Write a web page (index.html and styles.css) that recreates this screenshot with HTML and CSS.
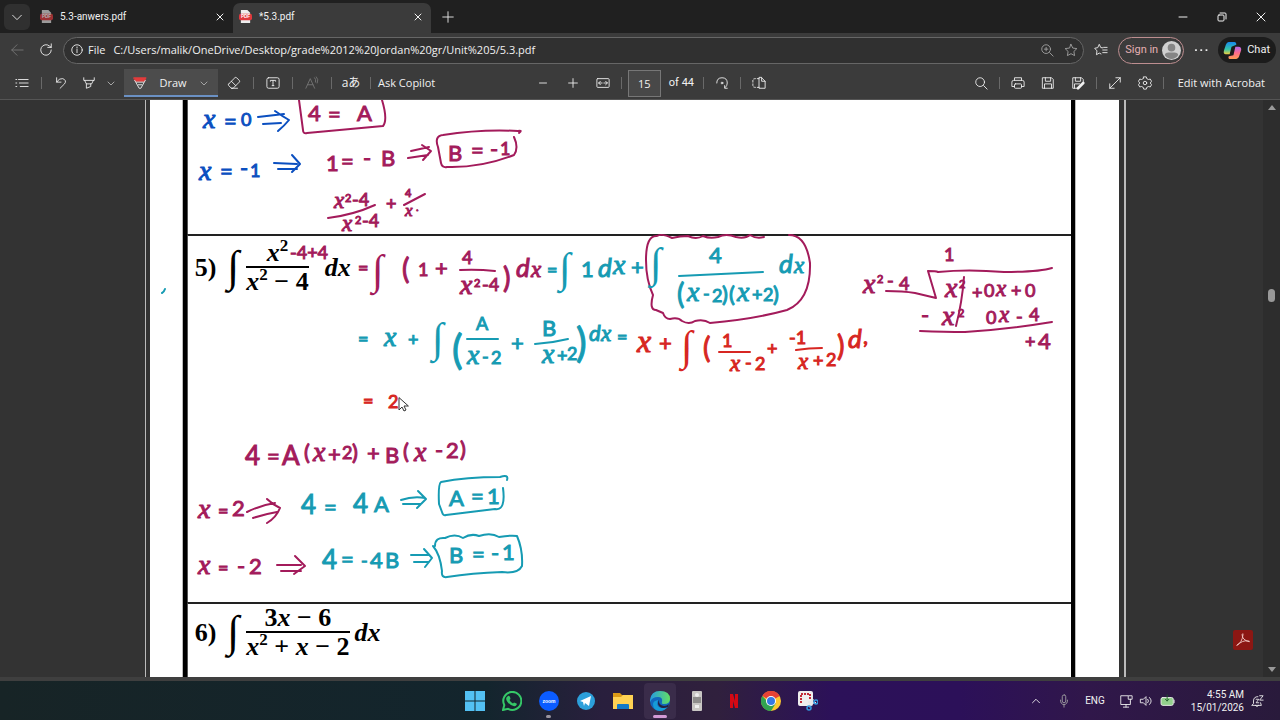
FILE: index.html
```html
<!DOCTYPE html>
<html lang="en">
<head>
<meta charset="utf-8">
<title>5.3.pdf</title>
<link rel="stylesheet" href="styles.css">
</head>
<body>
<header class="tabs">
  <button class="tab-menu" aria-label="Tab actions"><svg class="i" viewBox="0 0 16 16"><path d="M3 6l5 5 5-5"/></svg></button>
  <div class="tab">
    <svg class="pdf dim" viewBox="0 0 14 14"><path d="M2 0h7l3 3v11H2z" fill="#ddd"/><rect y="4" width="14" height="7" rx="2" fill="#e0393e"/><text x="7" y="9">PDF</text></svg>
    <span class="tab-name">5.3-anwers.pdf</span>
    <button class="plain" aria-label="Close tab"><svg class="x" viewBox="0 0 10 10"><path d="M2 2l6 6M8 2l-6 6"/></svg></button>
  </div>
  <div class="tab active">
    <svg class="pdf" viewBox="0 0 14 14"><path d="M2 0h7l3 3v11H2z" fill="#eee"/><rect y="4" width="14" height="7" rx="2" fill="#e0393e"/><text x="7" y="9">PDF</text></svg>
    <span class="tab-name">*5.3.pdf</span>
    <button class="plain" aria-label="Close tab"><svg class="x" viewBox="0 0 10 10"><path d="M2 2l6 6M8 2l-6 6"/></svg></button>
  </div>
  <button class="plain new" aria-label="New tab"><svg class="i" viewBox="0 0 16 16"><path d="M8 2v12M2 8h12"/></svg></button>
  <div class="win">
    <button class="plain" aria-label="Minimize"><svg class="x" viewBox="0 0 10 10"><path d="M1 5h8"/></svg></button>
    <button class="plain" aria-label="Restore"><svg class="x" viewBox="0 0 10 10"><rect x="1" y="3" width="6" height="6" rx="1"/><path d="M3 1h5q1 0 1 1v5"/></svg></button>
    <button class="plain" aria-label="Close"><svg class="x" viewBox="0 0 10 10"><path d="M1 1l8 8M9 1l-8 8"/></svg></button>
  </div>
</header>

<nav class="address-row">
  <button class="plain faint" aria-label="Back"><svg class="i" viewBox="0 0 16 16"><path d="M15 8H2M8 2L2 8l6 6"/></svg></button>
  <button class="plain" aria-label="Refresh"><svg class="i" viewBox="0 0 16 16"><path d="M14 8a6 6 0 1 1-2-4.500L14 5M14 1v4h-4"/></svg></button>
  <div class="address">
    <svg class="i" viewBox="0 0 16 16"><circle cx="8" cy="8" r="6"/><path d="M8 7v4M8 4.500v1"/></svg>
    <label class="file" for="url">File</label>
    <input id="url" class="url" value="C:/Users/malik/OneDrive/Desktop/grade%2012%20Jordan%20gr/Unit%205/5.3.pdf">
    <button class="plain soft" aria-label="Zoom"><svg class="i" viewBox="0 0 16 16"><circle cx="7" cy="7" r="5"/><path d="M11 11l4 4M7 5v4M5 7h4"/></svg></button>
    <button class="plain soft" aria-label="Favourite"><svg class="i" viewBox="0 0 16 16"><path d="M8 1.500l2 4.300 4.700.6-3.400 3.300.8 4.700L8 12.200l-4.100 2.200.8-4.700L1.300 6.400 6 5.800z"/></svg></button>
  </div>
  <button class="plain fav" aria-label="Favourites"><svg class="i" viewBox="0 0 16 16"><path d="M10 5.500L7.800 5.300 6 1.500 4.300 5.300.8 6l2.600 3-.6 4.400L6 11.500l2 1M11 5h4M10 8h5M10 11h5"/></svg></button>
  <button class="signin">Sign in <svg viewBox="0 0 20 20"><circle cx="10" cy="10" r="10" fill="#cfcfcf"/><circle cx="10" cy="7" r="4" fill="#858585"/><path d="M3 15q0-3 4-3h6q4 0 4 3-3 4-7 4t-7-4z" fill="#858585"/></svg></button>
  <button class="plain" aria-label="More"><svg class="i" viewBox="0 0 16 16"><path stroke-width="2" d="M2 8h.5M8 8h.5M14 8h.5"/></svg></button>
  <button class="chat"><svg viewBox="0 0 20 20"><defs><linearGradient id="ca" x2="0" y2="1"><stop stop-color="#1688ef"/><stop offset=".6" stop-color="#36c5a7"/><stop offset="1" stop-color="#f4d03c"/></linearGradient><linearGradient id="cb" x2="0" y2="1"><stop stop-color="#b267ec"/><stop offset=".5" stop-color="#ff6b8b"/><stop offset="1" stop-color="#ff9d52"/></linearGradient></defs><path d="M6 1h6q2 0 2 3L9 6 7 14H3q-3 0-2-4l2-6q1-3 3-3z" fill="url(#ca)"/><path d="M14 19H8q-3 0-2-3l5-1 2-9h3q4 0 3 4l-2 6q-1 3-3 3z" fill="url(#cb)"/></svg>Chat</button>
</nav>

<div class="tools">
  <button class="plain" aria-label="Contents"><svg class="i" viewBox="0 0 16 16"><path d="M1 4h1M4 4h11M1 8h1M5 8h10M1 12h1M6 12h9"/></svg></button>
  <i class="sep"></i>
  <button class="plain" aria-label="Undo"><svg class="i" viewBox="0 0 16 16"><path d="M3 2v5h5M3 7q3-5 7-4 5 2 2 6l-5 5"/></svg></button>
  <button class="plain" aria-label="Highlight"><svg class="i" viewBox="0 0 16 16"><path d="M2 2v3h12V2M3 5l2 4h6l2-4M5 9v5l5-2V9"/></svg></button>
  <button class="plain soft narrow" aria-label="Highlight colours"><svg class="x" viewBox="0 0 10 10"><path d="M2 4l3 3 3-3"/></svg></button>
  <button class="draw"><svg class="i" viewBox="0 0 16 16"><path d="M1 2h14l-2 4H3z" fill="#e33b3b" stroke="#e33b3b"/><path d="M2 5l5 9h2l5-9M4 7h8M6 10h4"/></svg>Draw<svg class="x soft" viewBox="0 0 10 10"><path d="M2 4l3 3 3-3"/></svg></button>
  <button class="plain" aria-label="Erase"><svg class="i" viewBox="0 0 16 16"><path d="M2 9l7-7q1-1 2 0l3 3q1 1 0 2l-7 7H5L2 11q-1-1 0-2zM5 6l5 5M5 14h7"/></svg></button>
  <i class="sep"></i>
  <button class="plain" aria-label="Add text"><svg class="i" viewBox="0 0 16 16"><rect x="1" y="2" width="14" height="12" rx="2"/><path d="M5 6V5h6v1M8 5v6M7 11h2"/></svg></button>
  <i class="sep"></i>
  <button class="plain faint" aria-label="Read aloud"><svg class="i" viewBox="0 0 16 16"><path d="M1 14L6 3l5 11M3 10h6M11 2q2 2 1 5M13 1q3 3 1 7"/></svg></button>
  <i class="sep"></i>
  <button class="plain translate">aあ</button>
  <i class="sep"></i>
  <button class="plain word">Ask Copilot</button>
  <div class="pager">
    <button class="plain" aria-label="Zoom out"><svg class="i" viewBox="0 0 16 16"><path d="M4 8h8"/></svg></button>
    <button class="plain" aria-label="Zoom in"><svg class="i" viewBox="0 0 16 16"><path d="M3 8h10M8 3v10"/></svg></button>
    <button class="plain" aria-label="Fit width"><svg class="i" viewBox="0 0 16 16"><rect x="1" y="3" width="14" height="10" rx="1"/><path d="M3 8h4M9 8h4M5 6L3 8l2 2M11 6l2 2-2 2"/></svg></button>
    <i class="sep"></i>
    <input id="page" class="page-no" value="15"><label for="page">of 44</label>
    <i class="sep"></i>
    <button class="plain" aria-label="Rotate"><svg class="i" viewBox="0 0 16 16"><path d="M2 8q0-6 6-6 6 0 6 6 0 3-2 5M14 14h-3v-3"/><circle cx="8" cy="8" r="1"/></svg></button>
    <i class="sep"></i>
    <button class="plain" aria-label="Page view"><svg class="i" viewBox="0 0 16 16"><path d="M8 3H4Q1 3 1 5v6q0 2 3 2h4" stroke-dasharray="2 2"/><path d="M8 2v12h7V6h-4V2zM11 2l4 4"/></svg></button>
  </div>
  <div class="right-tools">
    <button class="plain" aria-label="Find"><svg class="i" viewBox="0 0 16 16"><circle cx="7" cy="7" r="5"/><path d="M11 11l4 4"/></svg></button>
    <i class="sep"></i>
    <button class="plain" aria-label="Print"><svg class="i" viewBox="0 0 16 16"><path d="M4 5V2h8v3M4 12H1V7q0-2 2-2h10q2 0 2 2v5h-3"/><rect x="4" y="9" width="8" height="5" rx="1"/></svg></button>
    <button class="plain" aria-label="Save"><svg class="i" viewBox="0 0 16 16"><path d="M2 2h10l2 2v10H2zM5 2v4h6V2M4 14V9h8v5"/></svg></button>
    <button class="plain" aria-label="Save as"><svg class="i" viewBox="0 0 16 16"><path d="M7 14H2V2h10l2 2v3M5 2v4h6V2M4 14V9h6"/><path d="M14 8l-6 6" stroke-width="3"/></svg></button>
    <i class="sep"></i>
    <button class="plain" aria-label="Full screen"><svg class="i" viewBox="0 0 16 16"><path d="M2 14L14 2M9 2h5v5M2 9v5h5"/></svg></button>
    <button class="plain" aria-label="Settings"><svg class="i" viewBox="0 0 16 16"><circle cx="8" cy="8" r="2"/><path d="M6.500 1h3l.5 2 2 1 2-.5L15.500 6 14 8l1.500 2-1.500 2.500-2-.5-2 1-.5 2h-3L6 13l-2-1-2 .5L.5 10 2 8 .5 6 2 3.500l2 .5 2-1z"/></svg></button>
    <i class="sep"></i>
    <button class="plain word">Edit with Acrobat</button>
  </div>
</div>

<main class="viewer">
  <div class="sheet-edge">
    <article class="sheet">
      <div class="frame">
        <section class="row top"></section>
        <section class="row mid">
          <div class="formula"><span>5)</span><span class="int">∫</span><span class="frac"><span class="num"><i>x</i><sup>2</sup></span><span><i>x</i><sup>2</sup> − 4</span></span><i class="dx wide">dx</i></div>
        </section>
        <section class="row end">
          <div class="formula"><span>6)</span><span class="int">∫</span><span class="frac"><span class="num">3<i>x</i> − 6</span><span><i>x</i><sup>2</sup> + <i>x</i> − 2</span></span><i class="dx">dx</i></div>
        </section>
      </div>
      <svg class="ink" viewBox="149 100 969 577">
        <g class="blue">
          <text class="v" x="202" y="128">x</text><text x="223" y="129">=</text><text class="s" x="240" y="126">0</text>
          <path d="M257 117l26-3M262 124l18-1M274 111q7 5 14 9-4 5-11 11"/>
          <text class="v" x="198" y="180">x</text><text x="219" y="179">=</text><text x="239" y="176">-</text><text class="s" x="249" y="177">1</text>
          <path d="M273 163l23 1M277 169h19M291 155l8 9-8 8"/>
        </g>
        <g class="plum">
          <text x="307" y="121">4</text><text x="327" y="122">=</text><text x="356" y="121">A</text>
          <path d="M298 100l4 30q0 4 4 3l76-7q5-6-1-26"/>
          <text x="325" y="171">1</text><text x="340" y="169">=</text><text x="362" y="166">-</text><text x="380" y="166">B</text>
          <path d="M410 151l18-4M407 158l20-3M421 145l9 6-8 9"/>
          <text x="447" y="161">B</text><text x="470" y="158">=</text><text x="489" y="157">-</text><text class="s" x="499" y="155">1</text>
          <path d="M518 133q4-3-1-2-37-2-75 4-9 1-5 12l3 16q1 5 6 4 34 1 67-12 5-7 0-18"/>
          <text class="vs" x="333" y="208">x</text><text class="p" x="344" y="202">2</text><text class="s" x="351" y="206">-4</text>
          <path d="M327 218q25-3 47-13"/>
          <text class="vs" x="341" y="231">x</text><text class="p" x="354" y="224">2</text><text class="s" x="361" y="227">-4</text>
          <text class="s" x="385" y="210">+</text><text class="p" x="404" y="197">4</text><path d="M403 205l21-11"/><text class="vt" x="404" y="216">x</text><text class="p" x="415" y="211">.</text>

          <text class="s" x="289" y="259">-4+4</text><text class="s" x="357" y="274">=</text>
          <text class="int" x="371" y="284">∫</text><text class="b" x="401" y="279">(</text>
          <text class="s" x="417" y="276">1</text><text x="434" y="276">+</text><text class="s" x="461" y="264">4</text><path d="M459 270q17-1 35 1"/>
          <text class="v" x="459" y="294">x</text><text class="p" x="473" y="287">2</text><text class="s" x="481" y="291">-4</text>
          <text class="b" x="502" y="288">)</text><text class="d" x="515" y="277">d</text><text class="vs" x="530" y="277">x</text>
          <path d="M763 237q-8 2-14-2-5 4-14 2-10-4-18 0-8 2-15-1-7 4-15 0-8 0-16 2-10-5-15-2-11-1-11 24 0 20 7 35-4 15 3 15l7 3q2 6 7 6 8-2 12 2 7 4 13 0 9-2 15 2 45-4 77-13 24-10 23-47-4-28-21-28"/>
          <text class="s" x="943" y="261">1</text>
          <text class="v" x="862" y="293">x</text><text class="p" x="876" y="283">2</text><text class="s" x="886" y="287">-</text><text class="s" x="898" y="290">4</text>
          <path d="M885 291q17 0 29 2l21 5-8-27q8 0 10 1 30-3 66 0 35 0 48-4M963 277q-2 26-8 49"/>
          <text class="v" x="944" y="297">x</text><text class="p" x="958" y="288">2</text><text class="s" x="971" y="299">+</text><text class="s" x="983" y="297">0</text><text class="vs" x="995" y="296">x</text><text class="s" x="1010" y="297">+</text><text class="s" x="1024" y="297">0</text>
          <text x="920" y="323">-</text><text class="v" x="941" y="325">x</text><text class="p" x="957" y="317">2</text><text class="s" x="985" y="324">0</text><text class="vs" x="998" y="322">x</text><text class="s" x="1015" y="323">-</text><text class="s" x="1028" y="321">4</text>
          <path d="M919 331q25 1 45 1 45-3 87-10"/><text class="s" x="1024" y="348">+</text><text x="1037" y="349">4</text>

          <text class="m" x="244" y="465">4</text><text x="266" y="464">=</text><text class="m" x="281" y="465">A</text><text x="303" y="460">(</text><text class="v" x="312" y="461">x</text><text x="327" y="462">+</text><text class="s" x="341" y="459">2</text><text x="351" y="460">)</text>
          <text x="366" y="461">+</text><text x="384" y="463">B</text><text x="402" y="459">(</text><text class="v" x="413" y="461">x</text><text x="434" y="458">-</text><text x="445" y="458">2</text><text x="459" y="457">)</text>
          <text class="v" x="197" y="518">x</text><text class="s" x="217" y="517">=</text><text x="231" y="516">2</text><path d="M246 512q14-7 28-9M252 518q12-4 24-6M266 499q5 5 13 9-4 10-13 15"/>
          <text class="v" x="197" y="574">x</text><text class="s" x="217" y="574">=</text><text x="236" y="574">-</text><text x="248" y="574">2</text><path d="M276 565h24M280 571h20M294 556l10 10-11 8"/>
        </g>
        <g class="teal">
          <path d="M161 293q2-1 3-4"/>
          <text class="s" x="546" y="276">=</text><text class="int" x="558" y="282">∫</text><text x="580" y="277">1</text><text class="d" x="597" y="277">d</text><text class="v" x="612" y="274">x</text><text x="630" y="275">+</text>
          <text class="int" x="649" y="277">∫</text><text x="708" y="263">4</text><path d="M678 276q40-2 84-4"/><text class="d" x="778" y="273">d</text><text class="vs" x="793" y="273">x</text>
          <text class="b" x="676" y="304">(</text><text class="v" x="686" y="301">x</text><text class="s" x="702" y="300">-</text><text class="s" x="711" y="302">2</text><text x="721" y="302">)</text><text x="728" y="302">(</text><text class="v" x="736" y="301">x</text><text class="s" x="751" y="301">+</text><text class="s" x="762" y="301">2</text><text x="772" y="302">)</text>
          <text class="s" x="357" y="345">=</text><text class="v" x="383" y="346">x</text><text class="s" x="407" y="346">+</text><text class="int" x="431" y="352">∫</text><text class="h" x="451" y="364">(</text>
          <text class="s" x="475" y="330">A</text><path d="M466 339h31"/><text class="v" x="466" y="364">x</text><text class="s" x="481" y="363">-</text><text class="s" x="490" y="364">2</text>
          <text x="510" y="351">+</text><text x="541" y="336">B</text><path d="M534 344q17-1 33-5"/><text class="v" x="541" y="363">x</text><text class="s" x="556" y="362">+</text><text class="s" x="566" y="360">2</text><text class="h" x="575" y="357">)</text><text class="ds" x="588" y="341">d</text><text class="vs" x="600" y="341">x</text><text class="s" x="616" y="343">=</text>
          <text class="m" x="300" y="514">4</text><text x="323" y="515">=</text><text class="m" x="352" y="513">4</text><text x="373" y="512">A</text><path d="M400 500q12-4 24-2M402 504h18M417 491l8 8-9 9"/>
          <text x="448" y="506">A</text><text x="470" y="504">=</text><text x="486" y="504">1</text><path d="M506 480q2-6-7-3-34 0-59 5-3 2-2 22l3 8q1 4 4 3l49-6q11 2 8-21"/>
          <text class="m" x="321" y="569">4</text><text x="340" y="567">=</text><text class="s" x="360" y="567">-</text><text x="369" y="568">4</text><text x="384" y="568">B</text><path d="M410 555h18M413 562h15M423 549l8 9-7 9"/>
          <text x="448" y="563">B</text><text x="471" y="562">=</text><text x="490" y="561">-</text><text x="501" y="560">1</text><path d="M434 546q0-9 10-8 10-5 18 0 8-5 16-2 12-4 20 1 12-2 18-1 6 14 5 30-4 8-20 6-30 1-55 5-6 1-5-6-2-17-9-25"/>
        </g>
        <g class="red">
          <text class="vl" x="636" y="352">x</text><text x="658" y="351">+</text><text class="int" x="680" y="360">∫</text><text class="b" x="702" y="358">(</text><text class="s" x="721" y="347">1</text><path d="M718 352h31"/><text class="vs" x="729" y="371">x</text><text class="s" x="744" y="369">-</text><text class="s" x="754" y="370">2</text><text class="s" x="766" y="355">+</text><text class="s" x="788" y="344">-1</text><path d="M795 350q13-2 26-2"/><text class="vs" x="797" y="369">x</text><text class="s" x="812" y="367">+</text><text class="s" x="825" y="366">2</text><text class="b" x="836" y="356">)</text><text class="d" x="847" y="348">d</text><text x="862" y="344">,</text>
          <text class="s" x="362" y="407">=</text><text class="s" x="387" y="408">2</text>
        </g>
        <path class="cursor" d="M398 398v12l3-3 2 4 2-1-2-4h4z"/>
      </svg>
    </article>
  </div>
  <button class="acrobat" aria-label="Open in Acrobat"><svg viewBox="0 0 20 20"><path d="M3 16q6-3 7-12 0-2-1 0 0 6 8 8 1-1-2-1-5-1-12 5z"/></svg></button>
  <div class="scroll"><i class="up"></i><i class="thumb"></i><i class="down"></i></div>
</main>

<footer class="taskbar">
  <div class="apps">
    <button class="app" aria-label="Start"><svg viewBox="0 0 20 20"><path fill="#53c1f3" d="M0 0h9.500v9.500H0zM10.500 0H20v9.500h-9.500zM0 10.500h9.500V20H0zM10.500 10.500H20V20h-9.500z"/></svg></button>
    <button class="app" aria-label="WhatsApp"><svg viewBox="0 0 20 20"><path d="M1 19l1.300-5A9 9 0 1 1 6 17.800z" fill="none" stroke="#35c767" stroke-width="2"/><path d="M6 5q1-1 2 1l.5 2-1 1q1 2 3.500 3.500l1-1 2.500 1q1 1-1 2.500-4 1-8-4-3-4 .5-6z" fill="#35c767"/></svg></button>
    <button class="app" aria-label="Zoom"><svg viewBox="0 0 20 20"><circle cx="10" cy="10" r="10" fill="#0b5cff"/><text x="10" y="12" class="logo">zoom</text></svg><i class="dot"></i></button>
    <button class="app" aria-label="Telegram"><svg viewBox="0 0 20 20"><circle cx="10" cy="10" r="9" fill="#2c9fda"/><path d="M4 10l11-5-2 10-4-3-1 3-1-4z" fill="#fff"/></svg></button>
    <button class="app" aria-label="File Explorer"><svg viewBox="0 0 20 20"><path d="M0 2h7l2 2h10v13H0z" fill="#dc9b16"/><path d="M0 6h8l2-2h10v14H0z" fill="#ffd253"/><path d="M4 18v-4q0-1 1-1h10q1 0 1 1v4z" fill="#137ac8"/></svg></button>
    <button class="app current" aria-label="Edge"><svg viewBox="0 0 20 20"><defs><linearGradient id="ea"><stop stop-color="#259be1"/><stop offset="1" stop-color="#63df64"/></linearGradient></defs><circle cx="10" cy="10" r="10" fill="#1267bd"/><path d="M0 9Q1 0 10 0q10 0 10 8 0 5-6 5-3 0-2-2 1-5-4-5-6 0-8 5z" fill="url(#ea)"/><path d="M8 9q-3 8 6 8 3 0 4-2-3 5-8 5-7 0-7-7 0-3 5-4z" fill="#169bd7"/><path d="M9 9q-1 5 5 6 3 0 5-2l-1 3q-8 3-10-3 0-3 1-4z" fill="#25203f"/></svg><i class="dot long"></i></button>
    <button class="app" aria-label="Remote"><svg viewBox="0 0 20 20"><rect x="5" width="10" height="20" rx="1" fill="#c9c6c4"/><path d="M6 7h8M6 9h8M6 11h8" stroke="#555"/><circle cx="10" cy="4" r="2" fill="#eee"/><path d="M8 14h4v3H8z" fill="#eee"/></svg></button>
    <button class="app" aria-label="Netflix"><svg viewBox="0 0 20 20"><path d="M6 3h3l2 7V3h3v14h-3l-2-7v7H6z" fill="#d50914"/></svg></button>
    <button class="app" aria-label="Chrome"><svg viewBox="0 0 20 20"><circle cx="10" cy="10" r="10" fill="#fdc82f"/><path d="M10 10L1.300 5A10 10 0 0 1 18.700 5z" fill="#e64235"/><path d="M1.300 5A10 10 0 0 0 10 20l5-8-5 2z" fill="#31a350"/><circle cx="10" cy="10" r="5" fill="#fff"/><circle cx="10" cy="10" r="4" fill="#3479e4"/></svg></button>
    <button class="app" aria-label="Snipping Tool"><svg viewBox="0 0 20 20"><rect width="15" height="15" rx="2" fill="#eee"/><path d="M3 12V3h9v5" fill="none" stroke="#c32c38" stroke-width="2" stroke-dasharray="2 1"/><path d="M11 16l4-8M10 11l8 1" stroke="#e8e8e8" stroke-width="2"/><circle cx="11" cy="17" r="2" fill="none" stroke="#3299df" stroke-width="1.500"/><circle cx="18" cy="11" r="2" fill="none" stroke="#3299df" stroke-width="1.500"/></svg></button>
  </div>
  <div class="tray">
    <svg class="i" viewBox="0 0 16 16"><path d="M4 10l4-4 4 4"/></svg>
    <svg class="i soft" viewBox="0 0 16 16"><rect x="6" y="1" width="4" height="9" rx="2"/><path d="M4 7q0 5 4 5t4-5M8 12v3"/></svg>
    <span class="lang">ENG</span>
    <div class="status">
      <svg class="i" viewBox="0 0 16 16"><path d="M10 2H2v10h11V9M5 15h6M8 12v3M11 2h4v4h-4zM13 6v3"/></svg>
      <svg class="i" viewBox="0 0 16 16"><path d="M2 6h3l3-3v10l-3-3H2zM10 6q2 2 0 4M12 4q4 4 0 8"/></svg>
      <svg class="i" viewBox="0 0 18 16"><rect x="1" y="4" width="14" height="9" rx="2" fill="#92d08c"/><path d="M16 7v3"/><path d="M8 1v7M6 6l2 2 2-2" stroke="#1d5c28"/></svg>
    </div>
    <div class="clock"><span>4:55 AM</span><span>15/01/2026</span></div>
    <svg class="i" viewBox="0 0 16 16"><path d="M9 3Q4 3 4 8v3l-2 2h11l-1-3M6 13q2 3 4 0M11 2h4l-4 5h4M7 6h3l-3 4h3"/></svg>
  </div>
</footer>
</body>
</html>
```

FILE: styles.css
```css
* { box-sizing: border-box; }
body {
  margin: 0;
  height: 100vh;
  display: flex;
  flex-direction: column;
  overflow: hidden;
  background: #3b3b3b;
  color: #f1f1f1;
  font: 11px/16px "Open Sans", "Noto Sans", "Noto Sans CJK JP", sans-serif;
}
button, input { font: inherit; color: inherit; border: 0; background: none; padding: 0; margin: 0; min-width: 0; }
button { display: flex; align-items: center; justify-content: center; flex: none; }
svg { flex: none; display: block; }
.i, .x { fill: none; stroke: currentColor; stroke-linecap: round; stroke-linejoin: round; }
.i { width: 14px; height: 14px; }
.x { width: 10px; height: 10px; }
.plain { width: 24px; height: 24px; }
.soft { color: #a5a5a5; }
.faint { color: #777; }

.tabs { display: flex; flex: none; height: 33px; background: #202020; align-items: center; padding-left: 4px; }
.tab-menu { width: 26px; height: 26px; border-radius: 6px; background: #303030; }
.tab { display: flex; align-items: center; width: 193px; height: 30px; padding: 0 3px 0 0; margin-left: 10px; font: 10px/16px Roboto, sans-serif; }
.tab.active { width: 198px; background: #3b3b3b; border-radius: 7px 7px 0 0; margin: 3px 0 0; padding: 0 3px 3px 6px; }
.tab-name { flex: 1; margin-left: 7px; white-space: nowrap; }
.tab .plain { width: 20px; }
.pdf { width: 13px; height: 13px; }
.pdf text, .logo { font: bold 5px "Liberation Sans", sans-serif; fill: #fff; text-anchor: middle; }
.dim { opacity: .65; }
.new { margin-left: 5px; }
.win { margin-left: auto; display: flex; gap: 15px; padding-right: 7px; }

.address-row { display: flex; flex: none; align-items: center; height: 34px; padding: 0 4px 0 5px; gap: 5px; }
.address { flex: 1; display: flex; align-items: center; height: 27px; border: 1px solid #666; border-radius: 14px; background: #303030; padding: 0 0 0 6px; }
.file { margin: 0 8px 0 4px; }
.url { flex: 1; outline: 0; }
.signin { height: 27px; border: 1px solid #bd8e90; border-radius: 14px; color: #e5b0b3; gap: 4px; padding: 0 2px 0 6px; font: 11px/16px Roboto, sans-serif; }
.signin svg, .chat svg { width: 19px; height: 19px; }
.chat { height: 26px; border-radius: 13px; background: #1c1c1c; gap: 5px; padding: 0 6px 0 5px; font: 11px/16px Roboto, sans-serif; }

.tools { display: flex; flex: none; align-items: center; height: 33px; gap: 4px; padding: 0 15px 0 10px; border-bottom: 1px solid #555; }
.sep { width: 1px; height: 12px; background: #696969; margin: 0 3px; flex: none; }
.narrow { width: 12px; }
.draw { background: #4c4c4c; box-shadow: inset 0 -2px #6b91c4; height: 28px; width: 94px; gap: 12px; margin-left: 3px; }
.translate { font-size: 12px; }
.word { width: auto; white-space: nowrap; }
.pager, .right-tools { display: flex; align-items: center; gap: 6px; }
.pager { margin-left: 7.3%; }
.pager .sep, .right-tools .sep { margin: 0; }
.page-no { width: 33px; height: 27px; border: 1px solid #777; background: #484848; text-align: center; }
.pager label { margin: 0 3px 0 2px; white-space: nowrap; font: 11px/16px Roboto, sans-serif; }
.right-tools { margin-left: auto; }
.right-tools .word { margin-left: 8px; }

.viewer { flex: 1; min-height: 0; display: flex; position: relative; overflow: hidden; background: #333; border-bottom: 4px solid #3f3f3f; padding-left: 11.3%; }
.sheet-edge { flex: 1; border: solid #bbb; border-width: 0 2px 0 1px; margin-right: 12.1%; padding: 0 5px 0 4px; }
.sheet { position: relative; background: #fff; color: #000; min-height: 100%; padding: 0 44px 0 33px; }
.frame { border: solid #000; border-width: 0 4px 0 4px; outline: 1px solid #bbb; }
.row { padding: 3px 0 0 7px; border-left: 1px solid #555; }
.row + .row { border-top: 2px solid #222; }
.top { height: 134px; }
.mid { height: 368px; }
.end { height: 76px; padding-top: 0; }
.formula { display: flex; align-items: center; font: bold 26px/27px "Liberation Serif", serif; }
.formula .int { font: 44px/56px "Liberation Serif", serif; margin: 0 7px 0 11px; }
.frac { display: flex; flex-direction: column; align-items: center; white-space: nowrap; }
.frac .num { align-self: stretch; text-align: center; border-bottom: 2px solid #000; }
.formula sup { font-size: 17px; line-height: 0; }
.dx { margin-left: 5px; }
.dx.wide { margin-left: 16px; }

.ink { position: absolute; inset: 0 0 auto 0; width: 100%; height: auto; font-family: Lato, "Open Sans", sans-serif; font-size: 22px; }
.ink path { fill: none; stroke: currentColor; stroke-width: 2; stroke-linecap: round; stroke-linejoin: round; }
.ink text { fill: currentColor; stroke: currentColor; stroke-width: 1px; }
.blue { color: #0b4fc0; }
.plum { color: #a31b5b; }
.teal { color: #169bb3; }
.red { color: #d72622; }
.ink .s { font-size: 18px; }
.ink .p { font-size: 11px; }
.ink .m { font-size: 26px; }
.ink .b { font-size: 28px; }
.ink .h { font-size: 40px; }
.ink .v, .ink .vs, .ink .vt, .ink .vl { font-family: "Liberation Serif", serif; font-style: italic; font-size: 28px; }
.ink .vs { font-size: 23px; }
.ink .vt { font-size: 17px; }
.ink .vl { font-size: 32px; }
.ink .d, .ink .ds { font-size: 26px; font-style: italic; }
.ink .ds { font-size: 22px; }
.ink .int { font-family: "Liberation Serif", serif; font-size: 42px; stroke-width: 0; }
.ink .cursor { fill: #fff; stroke: #333; stroke-width: 1; }
.acrobat { position: absolute; right: 27px; bottom: 27px; width: 20px; height: 20px; background: #8c1713; border-radius: 2px; }
.acrobat svg { width: 18px; height: 18px; fill: none; stroke: #f2c9c5; }
.scroll { width: 17px; background: #2d2d2d; display: flex; flex-direction: column; align-items: center; padding: 5px 0; }
.up, .down { border: solid transparent; border-width: 0 4px; }
.up { border-bottom: 5px solid #999; }
.down { border-top: 5px solid #999; margin-top: auto; }
.thumb { width: 7px; height: 13px; border-radius: 4px; background: #999; margin-top: 179px; }

.taskbar { flex: none; height: 39px; display: flex; align-items: center; background: linear-gradient(90deg, #172426, #13252d 38%, #291f3d 47%, #30203d 56%, #2c1159 65%, #2c1059 75%, #30174a 85%, #291a3b); }
.apps { display: flex; flex: 1; justify-content: center; gap: 5px; padding-left: 253px; }
.app { width: 32px; height: 36px; position: relative; border-radius: 4px; }
.app svg { width: 20px; height: 20px; }
.current { background: #3a2c4a; }
.dot { position: absolute; bottom: 1px; width: 5px; height: 3px; border-radius: 2px; background: #99949f; }
.long { width: 14px; background: #d29bd6; }
.tray { display: flex; align-items: center; gap: 14px; font: 10px/13px Roboto, sans-serif; padding-right: 16px; }
.status { display: flex; gap: 6px; }
.status .i:last-child { width: 18px; }
.clock { display: flex; flex-direction: column; text-align: right; margin-right: -8px; }
```
